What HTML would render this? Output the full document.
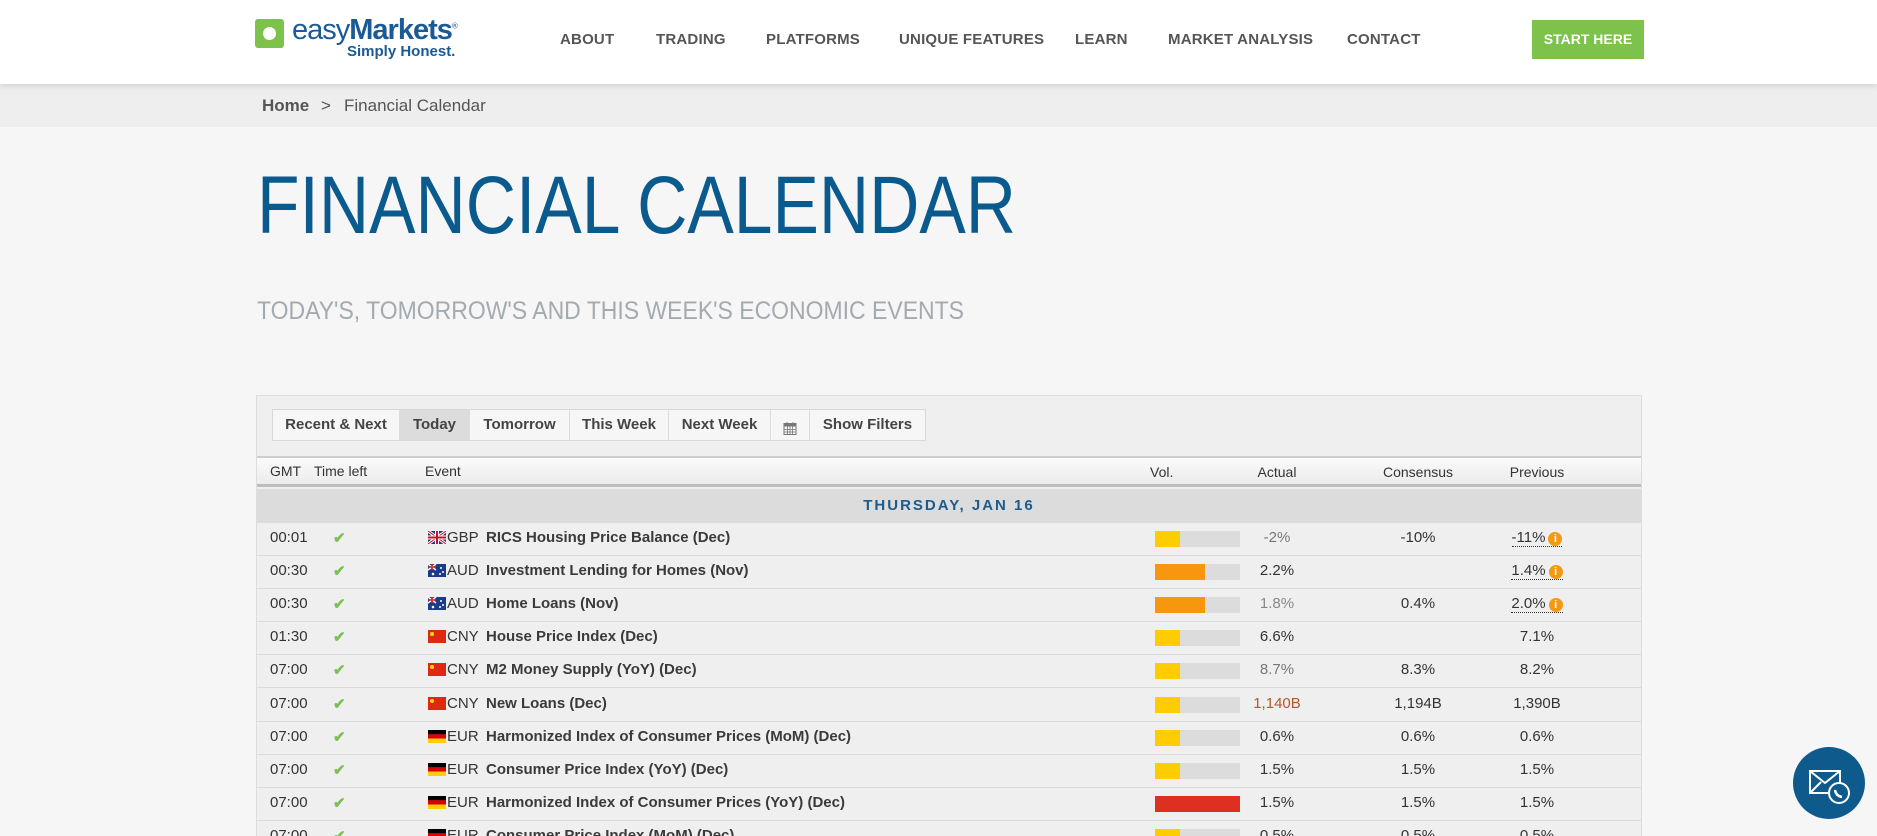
<!DOCTYPE html>
<html style="overflow:hidden;height:836px"><head><meta charset="utf-8">
<style>
*{margin:0;padding:0;box-sizing:border-box}
body{width:1877px;height:836px;overflow:hidden;background:#f6f6f6;font-family:"Liberation Sans",Arial,sans-serif;position:relative}
.hdr{position:absolute;left:0;top:0;width:1877px;height:84px;background:#fff;box-shadow:0 2px 6px rgba(0,0,0,.12);z-index:2}
.logo-sq{position:absolute;left:255px;top:19px;width:29px;height:29px;background:#7dc24b;border-radius:3px}
.logo-sq:after{content:"";position:absolute;left:8px;top:8px;width:13px;height:13px;background:#fff;border-radius:50%}
.logo-t{position:absolute;left:292px;top:14px;font-size:29px;color:#1a5a96;letter-spacing:-1px}
.logo-s{position:absolute;left:347px;top:43px;font-size:15px;font-weight:bold;color:#1a5a96}
.nav{position:absolute;top:31px;font-size:15px;color:#555;font-weight:bold;letter-spacing:.2px}
.btn{position:absolute;left:1532px;top:20px;width:112px;height:39px;background:#7dc24b;color:#fff;font-size:14px;font-weight:bold;text-align:center;line-height:39px}
.bc{position:absolute;left:0;top:84px;width:1877px;height:43px;background:#eeeeee}
.bc span{position:absolute;top:12px;font-size:17px;color:#555}
.panel{position:absolute;left:256px;top:395px;width:1386px;height:441px;background:#efefef;border:1px solid #ddd;border-bottom:0;overflow:hidden}
.tabs{position:absolute;left:15px;top:13px;height:32px;display:flex;border:1px solid #d8d8d8;background:#f6f6f6}
.tabs div{height:30px;line-height:30px;text-align:center;font-size:15px;font-weight:bold;color:#444;border-right:1px solid #ddd}
.th{position:absolute;left:0;top:60px;width:1384px;height:31px;background:linear-gradient(#fafafa,#ececec);border-top:2px solid #ccc;border-bottom:3px solid #bdbdbd;font-size:14px;color:#333}
.th span,.row span{position:absolute}
.day{position:absolute;left:0;top:93px;width:1384px;height:34px;background:#dcdcdc;text-align:center;line-height:34px;color:#1d5b8c;font-weight:bold;font-size:15px;letter-spacing:2px}
.row{position:absolute;left:0;width:1384px;height:33px;border-bottom:1px solid #dadada;font-size:15px;color:#333}
.row span{top:6px}
.c{text-align:center;width:120px}
.ev{font-weight:bold;color:#3a3a3a}
.chk{color:#7cbf54;font-weight:bold}
.vol{position:absolute;top:8px;left:898px;width:85px;height:16px;background:#dcdcdc}
.vol i{display:block;height:16px}
.flag{width:18px;height:13px;top:8px!important}
.inf{display:inline-block;width:14px;height:14px;border-radius:50%;background:#f39a12;color:#fff;font-size:11px;line-height:14px;text-align:center;font-weight:bold;margin-left:3px;vertical-align:0;font-style:normal}
.u{border-bottom:1px dotted #333}
</style></head><body>
<div class="hdr">
<div class="logo-sq"></div>
<div class="logo-t">easy<b>Markets</b><sup style="font-size:8px">®</sup></div>
<div class="logo-s">Simply Honest.</div>
<div class="nav" style="left:560px">ABOUT</div>
<div class="nav" style="left:656px">TRADING</div>
<div class="nav" style="left:766px">PLATFORMS</div>
<div class="nav" style="left:899px">UNIQUE FEATURES</div>
<div class="nav" style="left:1075px">LEARN</div>
<div class="nav" style="left:1168px">MARKET ANALYSIS</div>
<div class="nav" style="left:1347px">CONTACT</div>
<div class="btn">START HERE</div>
</div>
<div class="bc"><span style="left:262px;font-weight:bold">Home</span><span style="left:321px">&gt;</span><span style="left:344px">Financial Calendar</span></div>
<svg style="position:absolute;left:0;top:0" width="1877" height="340">
<text x="257" y="233" font-family="Liberation Sans" font-size="82" fill="#0b5a8e" textLength="759" lengthAdjust="spacingAndGlyphs">FINANCIAL CALENDAR</text>
<text x="257" y="319" font-family="Liberation Sans" font-size="25" fill="#a3aab0" textLength="707" lengthAdjust="spacingAndGlyphs">TODAY'S, TOMORROW'S AND THIS WEEK'S ECONOMIC EVENTS</text>
</svg>
<div class="panel">
<div class="tabs">
<div style="width:127px">Recent &amp; Next</div>
<div style="width:70px;background:#dcdcdc">Today</div>
<div style="width:100px">Tomorrow</div>
<div style="width:99px">This Week</div>
<div style="width:102px">Next Week</div>
<div style="width:39px;padding-top:6px"><svg width="14" height="14" viewBox="0 0 14 14"><rect x="1" y="2.5" width="12" height="11" fill="none" stroke="#777"/><rect x="1" y="2.5" width="12" height="3" fill="#777"/><path d="M4 1v3M10 1v3M1 8.5h12M1 11h12M4.5 5.5v8M7 5.5v8M9.5 5.5v8" stroke="#777" stroke-width=".8"/></svg></div>
<div style="width:115px;border-right:0">Show Filters</div>
</div>
<div class="th">
<span style="left:13px;top:5px">GMT</span><span style="left:57px;top:5px">Time left</span><span style="left:168px;top:5px">Event</span>
<span style="left:893px;top:6px">Vol.</span><span class="c" style="left:960px;top:6px">Actual</span><span class="c" style="left:1101px;top:6px">Consensus</span><span class="c" style="left:1220px;top:6px">Previous</span>
</div>
<div class="day">THURSDAY, JAN 16</div>
<div id="rows"></div>
</div>
<div style="position:absolute;left:1793px;top:747px;width:72px;height:72px;border-radius:50%;background:#0f5a8c">
<svg width="72" height="72"><rect x="17" y="24" width="30" height="22" fill="none" stroke="#fff" stroke-width="2"/><path d="M17 24 L32 36 L47 24 M17 46 L28 35" stroke="#fff" stroke-width="2" fill="none"/><circle cx="46" cy="46" r="10" fill="#0f5a8c" stroke="#fff" stroke-width="2"/><path d="M42 43 q1 6 7 7" stroke="#fff" stroke-width="2.5" fill="none"/></svg>
</div>
<script>
var F={GBP:'<svg class="flag" viewBox="0 0 18 13"><rect width="18" height="13" fill="#24397a"/><path d="M0 0L18 13M18 0L0 13" stroke="#fff" stroke-width="3"/><path d="M0 0L18 13M18 0L0 13" stroke="#c8102e" stroke-width="1"/><path d="M9 0V13M0 6.5H18" stroke="#fff" stroke-width="4"/><path d="M9 0V13M0 6.5H18" stroke="#c8102e" stroke-width="2"/></svg>',
AUD:'<svg class="flag" viewBox="0 0 18 13"><rect width="18" height="13" fill="#1b3a8a"/><path d="M0 0L8 6M8 0L0 6" stroke="#fff" stroke-width="1.5"/><path d="M4 0V6M0 3H8" stroke="#d22" stroke-width="1.5"/><circle cx="13" cy="4" r="1" fill="#fff"/><circle cx="15" cy="8" r="1" fill="#fff"/><circle cx="12" cy="10" r="1" fill="#fff"/><circle cx="5" cy="10" r="1.3" fill="#fff"/></svg>',
CNY:'<svg class="flag" viewBox="0 0 18 13"><rect width="18" height="13" fill="#de2910"/><circle cx="4" cy="4" r="2" fill="#ffde00"/></svg>',
EUR:'<svg class="flag" viewBox="0 0 18 13"><rect width="18" height="4.4" fill="#000"/><rect y="4.3" width="18" height="4.4" fill="#dd0000"/><rect y="8.6" width="18" height="4.4" fill="#ffce00"/></svg>'};
var Y='#ffcc00',O='#f7960f',R='#dd3020';
var D=[['00:01','GBP','RICS Housing Price Balance (Dec)',Y,25,'-2%','#777','-10%','-11%',1],
['00:30','AUD','Investment Lending for Homes (Nov)',O,50,'2.2%','#333','','1.4%',1],
['00:30','AUD','Home Loans (Nov)',O,50,'1.8%','#888','0.4%','2.0%',1],
['01:30','CNY','House Price Index (Dec)',Y,25,'6.6%','#333','','7.1%',0],
['07:00','CNY','M2 Money Supply (YoY) (Dec)',Y,25,'8.7%','#777','8.3%','8.2%',0],
['07:00','CNY','New Loans (Dec)',Y,25,'1,140B','#b5562a','1,194B','1,390B',0],
['07:00','EUR','Harmonized Index of Consumer Prices (MoM) (Dec)',Y,25,'0.6%','#333','0.6%','0.6%',0],
['07:00','EUR','Consumer Price Index (YoY) (Dec)',Y,25,'1.5%','#333','1.5%','1.5%',0],
['07:00','EUR','Harmonized Index of Consumer Prices (YoY) (Dec)',R,85,'1.5%','#333','1.5%','1.5%',0],
['07:00','EUR','Consumer Price Index (MoM) (Dec)',Y,25,'0.5%','#333','0.5%','0.5%',0]];
var h='';D.forEach(function(d,i){
h+='<div class="row" style="top:'+(127+i*33.1)+'px"><span style="left:13px">'+d[0]+'</span><span class="chk" style="left:76px">&#10004;</span><span class="flag" style="left:171px">'+F[d[1]]+'</span><span style="left:190px">'+d[1]+'</span><span class="ev" style="left:229px">'+d[2]+'</span><div class="vol"><i style="width:'+d[4]+'px;background:'+d[3]+'"></i></div><span class="c" style="left:960px;color:'+d[6]+'">'+d[5]+'</span><span class="c" style="left:1101px">'+d[7]+'</span><span class="c" style="left:1220px">'+(d[9]?'<span class="u" style="position:static">'+d[8]+'<i class="inf">i</i></span>':d[8])+'</span></div>';});
document.getElementById('rows').innerHTML=h;
</script>
</body></html>
